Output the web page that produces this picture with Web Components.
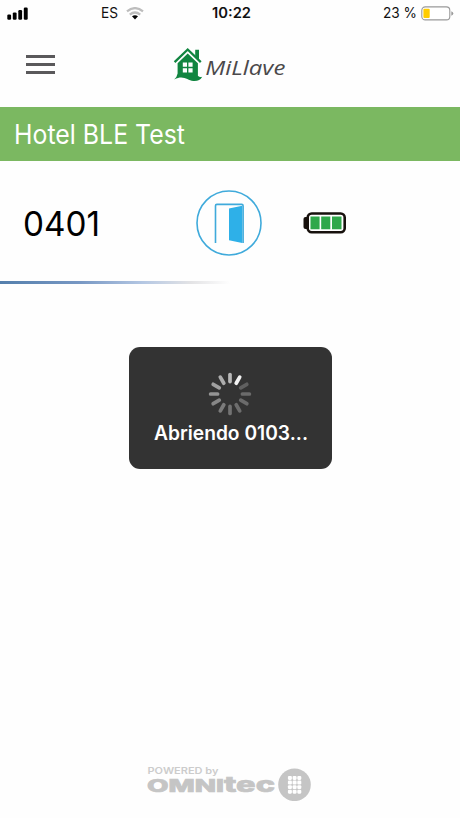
<!DOCTYPE html>
<html lang="es"><head><meta charset="utf-8"><title>MiLlave</title>
<style>body{margin:0;background:#fefefe;font-family:Inter,"Liberation Sans",sans-serif;color:#111}</style></head>
<body><millave-app></millave-app>
<script>
const define = (name, html, setup) => customElements.define(name, class extends HTMLElement {
  connectedCallback() {
    if (this.shadowRoot) return;
    const t = document.createElement('template');
    t.innerHTML = html;
    this.attachShadow({mode: 'open'}).append(t.content.cloneNode(true));
    if (setup) setup(this, this.shadowRoot);
  }
});

// A single line of text stretched to the width given in its "width" attribute.
define('fit-text', `<style>:host{display:block;white-space:nowrap}svg{display:block;overflow:visible}</style><svg><text x="0" lengthAdjust="spacingAndGlyphs" fill="currentColor"></text></svg>`, (el, root) => {
  const w = el.getAttribute('width'), h = el.getAttribute('height');
  const svg = root.querySelector('svg'), text = root.querySelector('text');
  svg.setAttribute('width', w); svg.setAttribute('height', h);
  text.setAttribute('y', h); text.setAttribute('textLength', w);
  text.textContent = el.getAttribute('text');
});

define('status-bar', `<style>
:host{display:grid;grid-template-columns:1fr auto 1fr;align-items:center;height:26px;padding:0 6px 0 7px;box-sizing:border-box}
.l,.r{display:flex;align-items:center}.r{justify-content:flex-end;gap:4px}svg{display:block}
.es{font-size:14px;margin:0 8px 0 73px}.time{font-size:14px;font-weight:600;padding-left:2px}.pct{font-size:14px}
</style>
<div class="l"><svg width="21" height="13" viewBox="0 0 21 13"><rect x=".3" y="7.5" width="3.8" height="5.2" rx="1.2"/><rect x="5.8" y="5.4" width="3.8" height="7.3" rx="1.2"/><rect x="11.3" y="3.1" width="3.8" height="9.6" rx="1.2"/><rect x="16.8" y=".6" width="3.9" height="12.1" rx="1.2"/></svg>
<fit-text class="es" text="ES" width="17" height="10"></fit-text>
<svg width="18" height="13" viewBox="0 0 18 13"><g fill="none" stroke="#bdbdbd" stroke-width="2.3"><path d="M1 4.3Q9-2 17 4.3M3.8 7.6Q9 3.4 14.2 7.6"/></g><path d="M6 9.3Q9 7.3 12 9.3L9 12.5z"/></svg></div>
<fit-text class="time" text="10:22" width="39" height="10"></fit-text>
<div class="r"><fit-text class="pct" text="23 %" width="34" height="10"></fit-text>
<svg width="33" height="15" viewBox="0 0 33 15"><rect x=".8" y=".9" width="28" height="13" rx="3.5" fill="#fff" stroke="#999" stroke-width="1.1"/><rect x="2.4" y="2.8" width="6.3" height="9.2" rx="1" fill="#fc0"/><path d="M30.3 5.2q2 .7 2 2.3t-2 2.3z" fill="#999"/></svg></div>`);

define('menu-icon', `<style>:host{display:flex;flex-direction:column;gap:5px;width:29px}i{height:3px;background:#5a595b}</style><i></i><i></i><i></i>`);

define('brand-logo', `<style>:host{display:block}svg{display:block}</style>
<svg width="114" height="36" viewBox="0 0 114 36">
<path d="M1.6 15.2L14.7 2.5 27.8 15.2" fill="none" stroke="#118540" stroke-width="2.3"/>
<path d="M22.2 2.8h3.8v10l-3.8-3.8z" fill="#118540"/>
<path d="M4.6 16.2L14.7 6.4 24.9 16.2v12.6q1.7 1.8 4.3.9-2.5 4.8-8.9 4.3C14 33.4 11 27.8 1.2 32.4q3-3 3.4-6z" fill="#118540"/>
<path d="M9.8 15.5H14v4.3H9.8zM15.4 15.5h4.2v4.3h-4.2zM9.8 21.3H14v4.3H9.8zM15.4 21.3h4.2v4.3h-4.2z" fill="#fff"/>
<text x="32.3" y="28.2" textLength="80" lengthAdjust="spacingAndGlyphs" font-family="Open Sans" font-style="italic" font-size="20.5" fill="#4b494b">MiLlave</text></svg>`);

define('app-header', `<style>:host{display:grid;grid-template-columns:1fr auto 1fr;align-items:start;height:81px;padding:0 26px;box-sizing:border-box}menu-icon{margin-top:29px}brand-logo{margin-top:21px}</style>
<menu-icon></menu-icon><brand-logo></brand-logo><span></span>`);

define('hotel-title', `<style>:host{display:flex;height:54px;padding:17.5px 14px 0;box-sizing:border-box;background:#7bb861;color:#fff;font-size:26.5px}</style><fit-text text="Hotel BLE Test" width="171" height="19"></fit-text>`);

define('door-button', `<style>:host,svg{display:block}</style><svg width="66" height="66" viewBox="0 0 66 66" fill="none" stroke="#3faadb"><circle cx="33" cy="33" r="32" stroke-width="1.6"/><path d="M19.5 53V15.8q0-1.4 1.4-1.4h24.8q1.4 0 1.4 1.4V53" stroke-width="1.6"/><path d="M33 18.4L46.2 15.8V53L33 50.2z" fill="#2eb0e8" stroke="none"/></svg>`);

define('lock-battery', `<style>:host,svg{display:block}</style><svg width="43" height="22" viewBox="0 0 43 22"><rect x=".5" y="5" width="6" height="12" rx="2" fill="#17110d"/><rect x="4.7" y="1.5" width="37" height="18.8" rx="4" fill="#fff" stroke="#17110d" stroke-width="2.6"/><path d="M7.5 4.5h9.1v12.8H7.5zM18.2 4.5h9.1v12.8h-9.1zM29 4.5h9.5v12.8H29z" fill="#2fa84a"/></svg>`);

define('room-row', `<style>:host{display:flex;align-items:center;height:120px;padding:4px 0 0 23px;box-sizing:border-box;font-size:34px;color:#000}
fit-text{width:173px}lock-battery{margin-left:41px}</style><fit-text text="0401" width="77" height="25"></fit-text><door-button></door-button><lock-battery></lock-battery>`);

define('fade-rule', `<style>:host{display:block;width:230px;height:3px;background:linear-gradient(90deg,#547fac,#7898c4 35%,#b4c7e3 62%,#e3e3e5 83%,#fefefe)}</style>`);

define('busy-spinner', `<style>:host,svg{display:block}</style><svg width="44" height="44" viewBox="-22 -22 44 44" stroke-width="3.7" stroke-linecap="round"></svg>`, (el, root) => {
  const tones = ['#b9b9b9','#f2f2f2','#606060','#6b6b6b','#6b6b6b','#6d6d6d','#737373','#7b7b7b','#878787','#949494','#a0a0a0','#adadad'];
  root.querySelector('svg').innerHTML = tones.map((c, i) => `<path d="M0-19.4V-12.4" stroke="${c}" transform="rotate(${i * 30})"/>`).join('');
});

define('busy-dialog', `<style>:host{display:flex;flex-direction:column;align-items:center;width:203px;height:122px;padding-top:25px;box-sizing:border-box;border-radius:11px;background:#333;color:#fff;font-size:19.5px;font-weight:600}fit-text{margin-top:10px}busy-spinner{margin-right:1px}</style>
<busy-spinner></busy-spinner><fit-text text="Abriendo 0103..." width="154" height="14"></fit-text>`);

define('powered-by', `<style>:host,svg{display:block}</style><svg width="166" height="36" viewBox="0 0 166 36" fill="#c5c5c5" font-family="Inter">
<text x=".5" y="9" font-size="9" font-weight="600" textLength="71" lengthAdjust="spacingAndGlyphs" fill="#ccc">POWERED by</text>
<g stroke="#c5c5c5" stroke-width=".7"><text x="0" y="26.6" font-size="17.3" font-weight="800" textLength="77" lengthAdjust="spacingAndGlyphs">OMNI</text>
<text x="77" y="26.6" font-size="22" font-weight="800" textLength="51" lengthAdjust="spacingAndGlyphs">tec</text></g>
<circle cx="147.5" cy="19.8" r="16.3"/><g class="k" fill="#fff"></g></svg>`, (el, root) => {
  let keys = '';
  for (let y = 0; y < 4; y++) for (let x = 0; x < 3; x++) keys += `<rect x="${140.9 + x * 4.7}" y="${11 + y * 4.6}" width="4" height="3.9" rx="1.1"/>`;
  root.querySelector('.k').innerHTML = keys;
});

define('millave-app', `<style>:host{position:relative;display:flex;flex-direction:column;height:818px;overflow:hidden}busy-dialog{position:absolute;left:129px;top:347px}powered-by{margin:auto 0 17px 147px}</style>
<status-bar></status-bar><app-header></app-header><hotel-title></hotel-title><room-row></room-row><fade-rule></fade-rule><busy-dialog></busy-dialog><powered-by></powered-by>`);
</script></body></html>
